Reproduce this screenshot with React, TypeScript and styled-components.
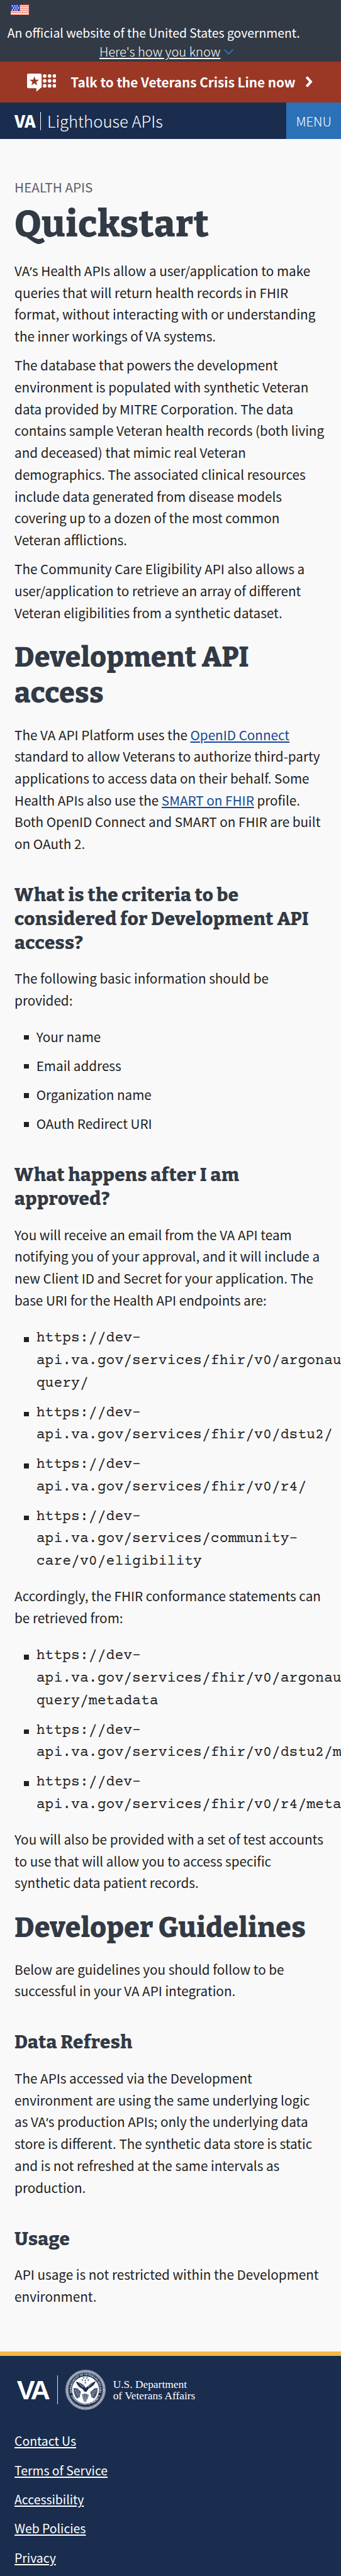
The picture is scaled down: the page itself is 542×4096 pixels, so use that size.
import React from 'react';
import styled, { createGlobalStyle, css } from 'styled-components';

const sans = '"Noto Sans CJK SC", "Open Sans", sans-serif';
const slab = '"Bitter", "DejaVu Serif Condensed", "DejaVu Serif", serif';
const mono = '"Courier Prime", "Liberation Mono", monospace';

const GlobalStyle = createGlobalStyle`
  *, *::before, *::after { box-sizing: border-box; }
  html, body { margin: 0; padding: 0; background: #f9f9f9; }
  h1, h2, h3, p, ul { margin: 0; padding: 0; font-weight: 400; }
  ul { list-style: none; }
`;

const Page = styled.div`
  width: 542px;
  height: 4096px;
  overflow: hidden;
  display: flex;
  flex-direction: column;
  background: #f9f9f9;
  color: #212121;
  font-family: ${sans};
  font-size: 20.68px;
  line-height: 34.714px;
  white-space: nowrap;
`;

const Banner = styled.div`
  height: 97.6px;
  padding: 6.5px 0 0 11.8px;
  background: #323a45;
  color: #fff;
  font-size: 19.38px;
  line-height: 30.4px;
  display: flex;
  flex-direction: column;
  align-items: flex-start;
`;
const Flag = styled.svg`
  width: 28.9px;
  height: 20.2px;
  margin: 0 0 12.8px 5.6px;
`;
const BannerToggle = styled.div`
  display: flex;
  align-items: center;
  gap: 6px;
  margin-left: 146.2px;
  a {
    color: #fff;
    font-weight: 300;
    font-size: 20.1px;
    text-decoration: underline;
    text-decoration-thickness: 2px;
    text-underline-offset: 2px;
  }
`;

const CrisisLine = styled.div`
  height: 65.8px;
  padding-left: 42.6px;
  background: #9a3725;
  color: #fff;
  font-weight: 700;
  display: flex;
  align-items: center;
`;
const CrisisIcon = styled.svg`
  width: 46.4px;
  height: 29px;
  margin: 3px 23.2px 0 0;
`;
const Chevron = styled.svg`
  width: 12px;
  height: 18px;
  margin-left: 15px;
`;

const NavBar = styled.header`
  height: 57.9px;
  background: #1a2d4e;
  color: #fff;
  display: flex;
  align-items: stretch;
  justify-content: space-between;
`;
const Brand = styled.div`
  display: flex;
  align-items: center;
  padding-left: 23px;
`;
const BrandMark = styled.span`
  font-size: 26.6px;
  font-weight: 900;
  letter-spacing: -0.5px;
`;
const BrandRule = styled.i`
  width: 1.4px;
  height: 29.6px;
  margin: 0 9.6px 0 8px;
  background: #fff;
`;
const BrandName = styled.span`
  font-size: 25.65px;
  font-weight: 300;
`;
const MenuButton = styled.div`
  width: 86.7px;
  background: #2b71b8;
  font-size: 20.4px;
  font-weight: 300;
  display: flex;
  align-items: center;
  justify-content: center;
`;

const Main = styled.main`
  padding: 58.3px 0 70.3px 23.1px;
`;
const Eyebrow = styled.div`
  color: #5b616b;
`;
const heading = css`
  font-family: ${slab};
  font-weight: 800;
  color: #323a45;
`;
const H1 = styled.h1`
  ${heading}
  margin-top: 4.6px;
  font-size: 58.5px;
  line-height: 75.2px;
  letter-spacing: 0.7px;
`;
const H2 = styled.h2`
  ${heading}
  margin-top: 26px;
  font-size: 44.45px;
  line-height: 56.6px;
  letter-spacing: 0.4px;
`;
const H3 = styled.h3`
  ${heading}
  margin-top: 46.2px;
  font-size: 29.6px;
  line-height: 37.75px;
  letter-spacing: 0.42px;
`;
const P = styled.p`
  margin-top: 11.57px;
  h1 + & { margin-top: 18.7px; }
  h2 + & { margin-top: 20px; }
  h3 + & { margin-top: 19.9px; }
  ul + & { margin-top: 18.7px; }
`;
const Apostrophe = styled.span`
  font-family: "Noto Sans", sans-serif;
  line-height: 0;
`;
const TextLink = styled.a`
  color: #164894;
  text-decoration: underline;
  text-decoration-thickness: 2px;
  text-underline-offset: 2px;
`;
const List = styled.ul<{ $mono?: boolean }>`
  display: flex;
  flex-direction: column;
  gap: 11.57px;
  margin-top: 22.9px;
  ${p => p.$mono && css`
    margin-top: 26.9px;
    font-family: ${mono};
    font-size: 23.12px;
    line-height: 35.53px;
  `}
`;
const Item = styled.li`
  display: flex;
  align-items: flex-start;
  gap: 12px;
  padding-left: 15.1px;
  &::before {
    content: "";
    flex: none;
    width: 7.5px;
    height: 7.5px;
    margin-top: 15px;
    background: #212121;
  }
`;
const Line = styled.span`
  display: block;
`;

const Footer = styled.footer`
  flex: 1;
  border-top: 7.2px solid #f4b946;
  padding: 22px 0 0 23.1px;
  background: #1a2d4e;
  color: #fff;
`;
const FooterLogo = styled.div`
  display: flex;
  align-items: center;
  height: 64px;
`;
const FooterMark = styled.span`
  margin-left: 3.6px;
  font-family: "Liberation Sans", sans-serif;
  font-size: 43.4px;
  font-weight: 700;
  letter-spacing: -4px;
`;
const FooterRule = styled.i`
  width: 1px;
  height: 46px;
  margin: 0 12.7px 0 15px;
  background: #dfe3e9;
`;
const Seal = styled.svg`
  width: 64px;
  height: 64px;
  margin-right: 11.2px;
`;
const Department = styled.span`
  padding-top: 1.5px;
  font-family: "Liberation Serif", serif;
  font-size: 17.4px;
  line-height: 17.9px;
`;
const FooterLinks = styled.nav`
  display: flex;
  flex-direction: column;
  align-items: flex-start;
  gap: 11.57px;
  margin-top: 32.5px;
  font-size: 19.38px;
  a {
    color: #fff;
    text-decoration: underline;
    text-decoration-thickness: 2px;
    text-underline-offset: 2px;
  }
`;

const Lines = ({ of }: { of: React.ReactNode[] }) => (
  <>{of.map((text, i) => <Line key={i}>{text}</Line>)}</>
);
const Endpoint = ({ of }: { of: string[] }) => (
  <Item><div><Lines of={['https://dev-', ...of]} /></div></Item>
);

const star = (cx: number, cy: number, r: number) =>
  Array.from({ length: 10 }, (_, i) => {
    const a = -Math.PI / 2 + (i * Math.PI) / 5;
    const d = i % 2 ? r * 0.4 : r;
    return `${(cx + d * Math.cos(a)).toFixed(2)},${(cy + d * Math.sin(a)).toFixed(2)}`;
  }).join(' ');

const FlagIcon = () => (
  <Flag viewBox="0 0 40 28" preserveAspectRatio="none">
    <rect width="40" height="28" fill="#fff" />
    {[[0, 2.4], [5.4, 1.7], [10.4, 1.7], [15.4, 1.7], [20.4, 1.7], [25.6, 2.4]].map(([y, h]) => (
      <rect key={y} y={y} width="40" height={h} fill="#d53c22" />
    ))}
    <rect width="20" height="17" fill="#1c35b4" />
    {[[3.7, 4], [9, 4], [14.2, 4], [6.2, 9], [11.4, 9], [16.6, 9], [3.7, 14], [9, 14], [14.2, 14]].map(([x, y]) => (
      <rect key={`${x}-${y}`} x={x - 1.5} y={y - 1.5} width="3" height="3" fill="#fff" />
    ))}
  </Flag>
);

const SealIcon = () => (
  <Seal viewBox="0 0 88 88">
    <defs>
      <path id="arcTop" d="M 15.5 53.5 A 30.5 30.5 0 1 1 72.5 53.5" />
      <path id="arcBottom" d="M 10.2 51 A 35 35 0 0 0 77.8 51" />
    </defs>
    <g fill="none" stroke="#fff">
      <circle cx="44" cy="44" r="43.2" strokeWidth="0.9" />
      <circle cx="44" cy="44" r="40.4" strokeWidth="3.4" strokeDasharray="1.9 1.1" />
      <circle cx="44" cy="44" r="37.7" strokeWidth="0.7" />
    </g>
    <circle cx="44" cy="44" r="29.6" fill="#fff" />
    <g fill="#fff" fontFamily="Liberation Serif, serif" fontWeight="700" fontSize="6">
      <text><textPath href="#arcTop" startOffset="50%" textAnchor="middle" textLength="112">DEPARTMENT OF VETERANS AFFAIRS</textPath></text>
      <text><textPath href="#arcBottom" startOffset="50%" textAnchor="middle" textLength="80">UNITED STATES OF AMERICA</textPath></text>
    </g>
    <g fill="#1a2d4e">
      {[[40, 18], [47, 18], [37, 22.5], [43.5, 23.5], [50, 22.5], [43.5, 28.5]].map(([x, y]) => (
        <polygon key={`${x}-${y}`} points={star(x, y, 2.3)} />
      ))}
      <path d="M23 26 C26 34 30 38 37 42 L42 48 L46 48 L51 41 C59 37 64 32 66 25 C60 27 54 30 50 35 L44 40 L41 34 C36 30 29 27 23 26Z" />
      <path d="M18 40 L29 41 L34 47 L31 60 L25 63 C20 57 17 49 18 40Z" opacity="0.8" />
      <path d="M70 40 L61 41 L54 48 L57 60 L63 63 C68 57 71 49 70 40Z" opacity="0.8" />
      <path d="M36 54 L43 52 L51 55 L49 62 L45 70 L41 70 L38 62Z" opacity="0.75" />
    </g>
    <g stroke="#fff" fill="none">
      <path d="M26 24 L38 39 M31 25 L41 38 M36 27 L42 36 M63 24 L50 38 M58 26 L48 37 M53 28 L47 36" strokeWidth="0.9" />
      <path d="M19 32 L36 48 M69 33 L51 50" strokeWidth="3" />
      <path d="M21 44 L29 60 M26 44 L31 55 M67 44 L58 60 M62 44 L57 55 M38 55 L43 69 M43 53 L44 69 M49 55 L45 68" strokeWidth="1" strokeDasharray="1.6 1" />
    </g>
  </Seal>
);

export default function App() {
  return (
    <Page>
      <GlobalStyle />
      <Banner>
        <FlagIcon />
        <span>An official website of the United States government.</span>
        <BannerToggle>
          <a>Here's how you know</a>
          <svg width="15" height="9" viewBox="0 0 20 12"><path d="M1 1 L10 10.5 L19 1" fill="none" stroke="#2b71b8" strokeWidth="2.6" /></svg>
        </BannerToggle>
      </Banner>
      <CrisisLine>
        <CrisisIcon viewBox="0 0 64 40">
          <path d="M3 0H29a3 3 0 0 1 3 3V29a3 3 0 0 1-3 3L20.5 40V32H3a3 3 0 0 1-3-3V3a3 3 0 0 1 3-3Z" fill="#fff" />
          <polygon points={star(16, 17, 11)} fill="#9a3725" />
          {[38.7, 49.4, 60].map(x => [5.3, 16, 26.8].map(y => <circle key={`${x}-${y}`} cx={x} cy={y} r="4" fill="#fff" />))}
        </CrisisIcon>
        <span>Talk to the Veterans Crisis Line now</span>
        <Chevron viewBox="0 0 16 24"><path d="M3 2 L12 12 L3 22" fill="none" stroke="#fff" strokeWidth="5.4" /></Chevron>
      </CrisisLine>
      <NavBar>
        <Brand>
          <BrandMark>VA</BrandMark>
          <BrandRule />
          <BrandName>Lighthouse APIs</BrandName>
        </Brand>
        <MenuButton>MENU</MenuButton>
      </NavBar>
      <Main>
        <Eyebrow>HEALTH APIS</Eyebrow>
        <H1>Quickstart</H1>
        <P>
          <Lines of={[
            <>VA<Apostrophe>’</Apostrophe>s Health APIs allow a user/application to make</>,
            'queries that will return health records in FHIR',
            'format, without interacting with or understanding',
            'the inner workings of VA systems.',
          ]} />
        </P>
        <P>
          <Lines of={[
            'The database that powers the development',
            'environment is populated with synthetic Veteran',
            'data provided by MITRE Corporation. The data',
            'contains sample Veteran health records (both living',
            'and deceased) that mimic real Veteran',
            'demographics. The associated clinical resources',
            'include data generated from disease models',
            'covering up to a dozen of the most common',
            'Veteran afflictions.',
          ]} />
        </P>
        <P>
          <Lines of={[
            'The Community Care Eligibility API also allows a',
            'user/application to retrieve an array of different',
            'Veteran eligibilities from a synthetic dataset.',
          ]} />
        </P>
        <H2><Lines of={['Development API', 'access']} /></H2>
        <P>
          <Lines of={[
            <>The VA API Platform uses the <TextLink>OpenID Connect</TextLink></>,
            'standard to allow Veterans to authorize third-party',
            'applications to access data on their behalf. Some',
            <>Health APIs also use the <TextLink>SMART on FHIR</TextLink> profile.</>,
            'Both OpenID Connect and SMART on FHIR are built',
            'on OAuth 2.',
          ]} />
        </P>
        <H3><Lines of={['What is the criteria to be', 'considered for Development API', 'access?']} /></H3>
        <P><Lines of={['The following basic information should be', 'provided:']} /></P>
        <List>
          <Item>Your name</Item>
          <Item>Email address</Item>
          <Item>Organization name</Item>
          <Item>OAuth Redirect URI</Item>
        </List>
        <H3><Lines of={['What happens after I am', 'approved?']} /></H3>
        <P>
          <Lines of={[
            'You will receive an email from the VA API team',
            'notifying you of your approval, and it will include a',
            'new Client ID and Secret for your application. The',
            'base URI for the Health API endpoints are:',
          ]} />
        </P>
        <List $mono>
          <Endpoint of={['api.va.gov/services/fhir/v0/argonaut-', 'query/']} />
          <Endpoint of={['api.va.gov/services/fhir/v0/dstu2/']} />
          <Endpoint of={['api.va.gov/services/fhir/v0/r4/']} />
          <Endpoint of={['api.va.gov/services/community-', 'care/v0/eligibility']} />
        </List>
        <P><Lines of={['Accordingly, the FHIR conformance statements can', 'be retrieved from:']} /></P>
        <List $mono>
          <Endpoint of={['api.va.gov/services/fhir/v0/argonaut-', 'query/metadata']} />
          <Endpoint of={['api.va.gov/services/fhir/v0/dstu2/metadata']} />
          <Endpoint of={['api.va.gov/services/fhir/v0/r4/metadata']} />
        </List>
        <P>
          <Lines of={[
            'You will also be provided with a set of test accounts',
            'to use that will allow you to access specific',
            'synthetic data patient records.',
          ]} />
        </P>
        <H2>Developer Guidelines</H2>
        <P><Lines of={['Below are guidelines you should follow to be', 'successful in your VA API integration.']} /></P>
        <H3>Data Refresh</H3>
        <P>
          <Lines of={[
            'The APIs accessed via the Development',
            'environment are using the same underlying logic',
            <>as VA<Apostrophe>’</Apostrophe>s production APIs; only the underlying data</>,
            'store is different. The synthetic data store is static',
            'and is not refreshed at the same intervals as',
            'production.',
          ]} />
        </P>
        <H3>Usage</H3>
        <P><Lines of={['API usage is not restricted within the Development', 'environment.']} /></P>
      </Main>
      <Footer>
        <FooterLogo>
          <FooterMark>VA</FooterMark>
          <FooterRule />
          <SealIcon />
          <Department><Lines of={['U.S. Department', 'of Veterans Affairs']} /></Department>
        </FooterLogo>
        <FooterLinks>
          <a>Contact Us</a>
          <a>Terms of Service</a>
          <a>Accessibility</a>
          <a>Web Policies</a>
          <a>Privacy</a>
        </FooterLinks>
      </Footer>
    </Page>
  );
}
